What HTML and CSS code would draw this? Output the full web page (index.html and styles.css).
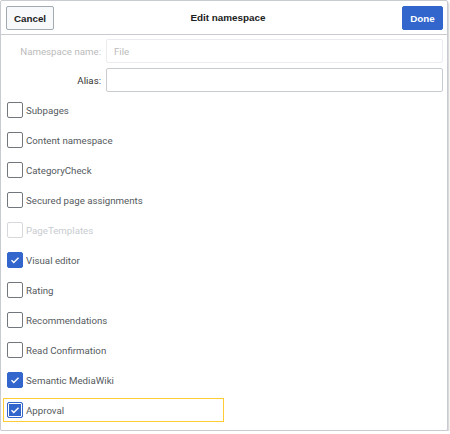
FILE: index.html
```html
<!DOCTYPE html>
<html>
<head>
<meta charset="utf-8">
<link rel="stylesheet" href="styles.css">
</head>
<body>
<div class="dialog">
  <div class="head">
    <button class="btn cancel">Cancel</button>
    <div class="title">Edit namespace</div>
    <button class="btn done">Done</button>
  </div>
  <div class="form">
    <div class="field">
      <label class="lbl disabled">Namespace name:</label>
      <div class="input disabled-input"><span>File</span></div>
    </div>
    <div class="field">
      <label class="lbl">Alias:</label>
      <div class="input"></div>
    </div>
    <div class="checks">
      <div class="row"><span class="cb"></span><span class="txt">Subpages</span></div>
      <div class="row"><span class="cb"></span><span class="txt">Content namespace</span></div>
      <div class="row"><span class="cb"></span><span class="txt">CategoryCheck</span></div>
      <div class="row"><span class="cb"></span><span class="txt">Secured page assignments</span></div>
      <div class="row off"><span class="cb"></span><span class="txt">PageTemplates</span></div>
      <div class="row"><span class="cb on"><svg viewBox="0 0 16 16"><path d="M4 8.3l2.6 2.6L12 5.5" fill="none" stroke="#fff" stroke-width="1.6"/></svg></span><span class="txt">Visual editor</span></div>
      <div class="row"><span class="cb"></span><span class="txt">Rating</span></div>
      <div class="row"><span class="cb"></span><span class="txt">Recommendations</span></div>
      <div class="row"><span class="cb"></span><span class="txt">Read Confirmation</span></div>
      <div class="row"><span class="cb on"><svg viewBox="0 0 16 16"><path d="M4 8.3l2.6 2.6L12 5.5" fill="none" stroke="#fff" stroke-width="1.6"/></svg></span><span class="txt">Semantic MediaWiki</span></div>
      <div class="row focus"><span class="cb on focus-cb"><svg viewBox="0 0 16 16"><path d="M4 8.3l2.6 2.6L12 5.5" fill="none" stroke="#fff" stroke-width="1.6"/></svg></span><span class="txt">Approval</span></div>
    </div>
  </div>
</div>
</body>
</html>
```
FILE: styles.css
```css
html, body {
  margin: 0;
  padding: 0;
  background: #fff;
}
body {
  font-family: Roboto, "Liberation Sans", Arial, sans-serif;
  font-size: 9.7px;
  color: #222;
}
.dialog {
  width: 446px;
  height: 429px;
  border: 1px solid #c8ccd1;
  border-radius: 2px;
  box-shadow: 1px 2px 2px rgba(0,0,0,0.2);
  background: #fff;
  box-sizing: content-box;
}
.head {
  border-bottom: 1px solid #c8ccd1;
  display: flex;
  align-items: flex-start;
  padding: 5px 4px 0 5px;
  box-sizing: border-box;
  height: 34px;
}
.btn {
  font-family: "Liberation Sans", Arial, sans-serif;
  font-size: 9.8px;
  font-weight: bold;
  height: 24px;
  border-radius: 2px;
  padding: 0;
  box-sizing: border-box;
}
.cancel {
  width: 48px;
  background: #f8f9fa;
  border: 1px solid #a2a9b1;
  color: #202122;
}
.done {
  width: 41px;
  background: #3366cc;
  border: 1px solid #3366cc;
  color: #fff;
}
.title {
  flex: 1;
  text-align: center;
  font-family: "Liberation Sans", Arial, sans-serif;
  font-weight: bold;
  font-size: 9.9px;
  color: #202122;
  line-height: 24px;
}
.form {
  padding-top: 4px;
}
.field {
  display: flex;
  align-items: center;
  gap: 5px;
  margin-bottom: 5px;
}
.lbl {
  width: 100px;
  text-align: right;
  white-space: nowrap;
  color: #333;
}
.lbl.disabled {
  color: #bbb;
}
.input {
  width: 337px;
  height: 24px;
  border: 1px solid #c8ccd1;
  border-radius: 2px;
  box-sizing: border-box;
  display: flex;
  align-items: center;
  padding-left: 7px;
}
.disabled-input {
  border-color: #eaecf0;
  color: #bbb;
}
.checks {
  padding-top: 1px;
}
.row {
  width: 221px;
  height: 24px;
  box-sizing: border-box;
  margin-left: 2px;
  margin-bottom: 6px;
  padding-left: 3px;
  border: 1px solid transparent;
  display: flex;
  align-items: center;
  gap: 3px;
  color: #54595d;
}
.row.focus {
  border-color: #fc3;
}
.row.off {
  color: #c8ccd1;
}
.cb {
  width: 16px;
  height: 16px;
  box-sizing: border-box;
  border: 1px solid #72777d;
  border-radius: 2px;
  background: #fff;
  display: inline-flex;
  flex: none;
}
.row.off .cb {
  border-color: #d6d8dc;
}
.cb.on {
  background: #3366cc;
  border-color: #3366cc;
}
.cb svg {
  width: 14px;
  height: 14px;
}
.focus-cb {
  box-shadow: inset 0 0 0 1px #fff;
}
```
